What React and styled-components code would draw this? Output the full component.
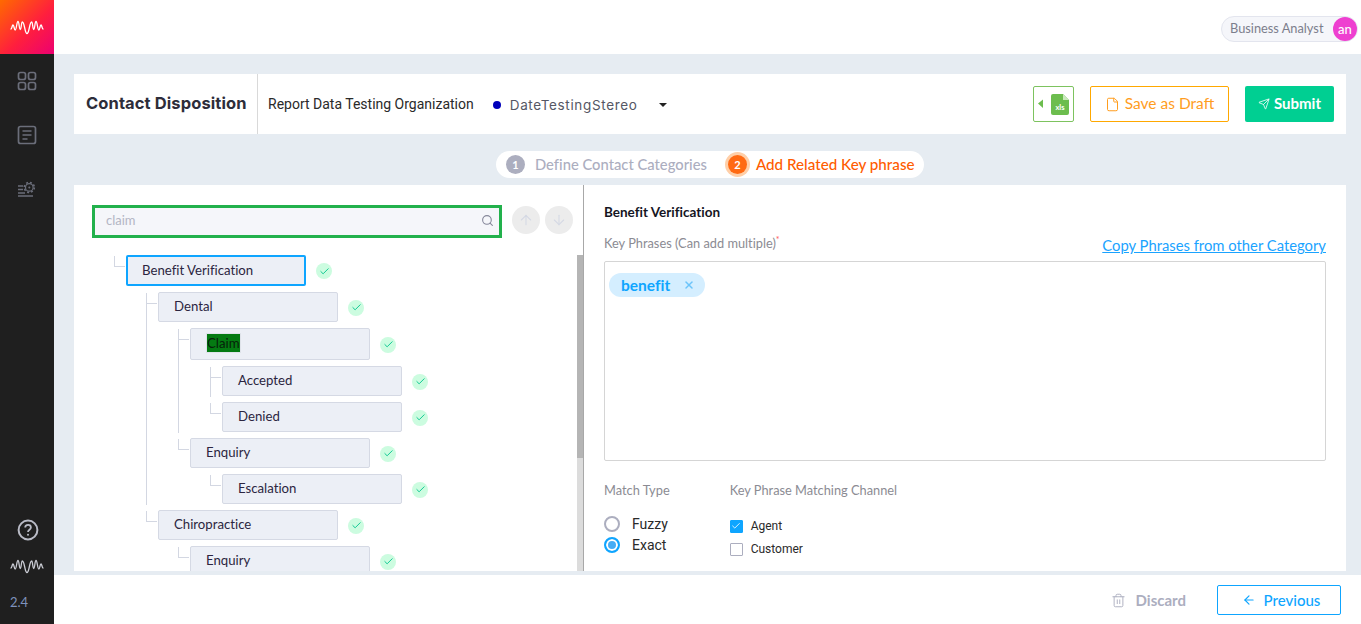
import React from 'react';
import styled, { createGlobalStyle } from 'styled-components';
import { ArrowDown, ArrowLeft, ArrowUp, Check, File, Search, Send, Trash2, X } from 'lucide-react';

const GlobalStyle = createGlobalStyle`
  html, body, #root { height: 100%; }
  body {
    margin: 0;
    font-family: "Lato", "Noto Sans", sans-serif;
    font-variant-ligatures: none;
    color: #2b2b3a;
    overflow: hidden;
  }
  * { box-sizing: border-box; }
`;

const Shell = styled.div`
  display: flex;
  height: 624px;
  background: #fff;
`;

const Sidebar = styled.aside`
  width: 54px;
  flex-shrink: 0;
  background: #1f1f1f;
  display: flex;
  flex-direction: column;
  align-items: center;
`;

const LogoBox = styled.div`
  width: 54px;
  height: 54px;
  background: linear-gradient(135deg, #ff6a00 0%, #ff1f3d 55%, #ec0072 100%);
  display: flex;
  align-items: center;
  justify-content: center;
  margin-bottom: 13px;
`;

const NavIcon = styled.div`
  height: 28px;
  margin-bottom: 26px;
  display: flex;
  align-items: center;
  justify-content: center;
  color: #6b6e7a;
`;

const SideBottom = styled.div`
  margin-top: auto;
  width: 100%;
  display: flex;
  flex-direction: column;
  align-items: center;
  padding-bottom: 14px;
  color: #b9bbc6;
`;

const HelpButton = styled.div`
  display: flex;
  margin: 0 0 17px 1px;
`;

const Version = styled.div`
  align-self: flex-start;
  margin: 20px 0 0 10px;
  font-size: 13px;
  line-height: 16px;
  color: #7f92bd;
`;

const Main = styled.div`
  flex: 1;
  min-width: 0;
  display: flex;
  flex-direction: column;
`;

const TopBar = styled.header`
  height: 54px;
  flex-shrink: 0;
  display: flex;
  align-items: center;
  justify-content: flex-end;
  padding: 4px 3px 0 0;
  background: #fff;
`;

const RolePill = styled.div`
  height: 26px;
  width: 137px;
  border: 1px solid #e3e5ee;
  border-radius: 13px;
  background: #f5f6fa;
  display: flex;
  align-items: center;
  justify-content: space-between;
  padding-left: 8px;
  font-size: 12.8px;
  color: #7c7e8c;
`;

const RoleName = styled.span`
  margin-top: -2px;
`;

const Avatar = styled.span`
  width: 24px;
  height: 24px;
  border-radius: 50%;
  background: #ee3fd0;
  color: #fff;
  font-size: 13px;
  font-weight: 500;
  display: flex;
  align-items: center;
  justify-content: center;
`;

const Content = styled.main`
  flex: 1;
  min-height: 0;
  background: #e6ecf2;
  padding: 20px 15px 4px 20px;
  display: flex;
  flex-direction: column;
`;

const HeaderCard = styled.section`
  height: 60px;
  flex-shrink: 0;
  background: #fff;
  display: flex;
  align-items: center;
  padding-right: 12px;
`;

const PageTitle = styled.h1`
  width: 184px;
  height: 100%;
  margin: 0;
  padding: 0 0 2px 12px;
  border-right: 1px solid #d9d9d9;
  font-family: "Inter", sans-serif;
  font-size: 16.5px;
  font-weight: 700;
  letter-spacing: 0.1px;
  color: #2d2d3a;
  display: flex;
  align-items: center;
  white-space: nowrap;
`;

const OrgName = styled.span`
  margin-left: 10px;
  font-family: "Roboto", sans-serif;
  font-size: 14px;
  color: #2a2a2a;
`;

const ProcessSelect = styled.div`
  margin: 2px 0 0 19px;
  display: flex;
  align-items: center;
  font-family: "Inter", sans-serif;
  font-size: 13.5px;
  color: #555764;
  letter-spacing: 0.65px;
`;

const Dot = styled.span`
  width: 8px;
  height: 8px;
  border-radius: 50%;
  background: #0000bb;
  margin-right: 9px;
`;

const Caret = styled.span`
  margin-left: 22px;
  border-left: 4px solid transparent;
  border-right: 4px solid transparent;
  border-top: 4px solid #222;
`;

const Actions = styled.div`
  margin-left: auto;
  display: flex;
  gap: 16px;
`;

const ExportButton = styled.button`
  width: 41px;
  height: 36px;
  padding: 0;
  background: #fff;
  border: 1px solid #7dc35f;
  border-radius: 2px;
  display: flex;
  align-items: center;
  justify-content: center;
`;

const DraftButton = styled.button`
  width: 139px;
  height: 36px;
  padding: 0 0 3px;
  background: #fff;
  border: 1px solid #ffa800;
  border-radius: 2px;
  color: #ff9d1e;
  font: 400 15.5px "Lato", sans-serif;
  display: flex;
  align-items: center;
  justify-content: center;
  gap: 5px;

  svg { margin-top: 3px; }
`;

const SubmitButton = styled.button`
  width: 89px;
  height: 36px;
  padding: 0 0 3px;
  background: #00cf92;
  border: none;
  border-radius: 2px;
  color: #fff;
  font: 700 15px "Lato", sans-serif;
  display: flex;
  align-items: center;
  justify-content: center;
  gap: 4px;

  svg { margin-top: 3px; }
`;

const StepperRow = styled.div`
  height: 51px;
  flex-shrink: 0;
  display: flex;
  align-items: center;
  justify-content: center;
  padding-top: 10px;
`;

const Stepper = styled.div`
  height: 27px;
  width: 428px;
  background: #fff;
  border-radius: 14px;
  display: flex;
  align-items: center;
  padding-left: 10px;
`;

const StepBadge = styled.span`
  width: 19px;
  height: 19px;
  flex-shrink: 0;
  border-radius: 50%;
  background: ${p => (p.$active ? '#ff6a13' : '#acaebf')};
  box-shadow: ${p => (p.$active ? '0 0 0 3px #ffcfa8' : 'none')};
  color: #fff;
  font-size: 11px;
  font-weight: 700;
  display: flex;
  align-items: center;
  justify-content: center;
  margin-left: ${p => (p.$active ? '21px' : '0')};
`;

const StepLabel = styled.span`
  margin-left: ${p => (p.$active ? '9px' : '10px')};
  padding-bottom: 2px;
  font-size: ${p => (p.$active ? '15.2px' : '14.75px')};
  font-weight: 500;
  color: ${p => (p.$active ? '#ff5c00' : '#acaebf')};
  white-space: nowrap;
`;

const Panels = styled.div`
  flex: 1;
  min-height: 0;
  display: flex;
  background: #fff;
`;

const LeftPanel = styled.section`
  position: relative;
  width: 510px;
  flex-shrink: 0;
  border-right: 1px solid #a8a8a8;
  padding-top: 20px;
  display: flex;
  flex-direction: column;
  min-height: 0;
`;

const SearchRow = styled.div`
  display: flex;
  align-items: flex-start;
  padding-left: 18px;
  margin-bottom: 17px;
`;

const SearchBox = styled.div`
  width: 410px;
  height: 33px;
  border: 3px solid #22b14c;
  background: #f5f6fa;
  display: flex;
  align-items: center;
  justify-content: space-between;
  padding: 0 5px 3px 11px;
  font-size: 13px;
  color: #b3b5c4;
  margin-right: 10px;
`;

const RoundButton = styled.button`
  width: 28px;
  height: 28px;
  padding: 0;
  margin: 1px 5px 0 0;
  border: none;
  border-radius: 50%;
  background: #ececec;
  color: #d5d9e4;
  display: flex;
  align-items: center;
  justify-content: center;
`;

const TreeScroll = styled.div`
  flex: 1;
  min-height: 0;
  overflow: hidden;
  padding-left: 52px;
`;

const ScrollTrack = styled.div`
  position: absolute;
  right: 0;
  top: 70px;
  bottom: 0;
  width: 6px;
  background: #dcdcdc;
`;

const ScrollThumb = styled.div`
  height: 203px;
  background: #b5b5b5;
`;

const Branch = styled.ul`
  list-style: none;
  margin: 0;
  padding: 0 0 0 ${p => (p.$root ? '0' : '32px')};
`;

const Leaf = styled.li`
  position: relative;

  &::before {
    content: '';
    position: absolute;
    left: -12px;
    top: 1px;
    width: 10px;
    height: 10px;
    border-left: 1px solid #d3d7e2;
    border-bottom: 1px solid #d3d7e2;
  }

  &:not(:last-child)::after {
    content: '';
    position: absolute;
    left: -12px;
    top: 1px;
    bottom: -1px;
    border-left: 1px solid #d3d7e2;
  }
`;

const Row = styled.div`
  display: flex;
  align-items: center;
  gap: 10px;
  margin-bottom: 6px;
`;

const Node = styled.div`
  width: 180px;
  padding: ${p => (p.$selected ? '4px 14px 5px' : '4px 15px 6px')};
  background: #eceff6;
  border: ${p => (p.$selected ? '2px solid #0ea5ff' : '1px solid #d5d9e4')};
  border-radius: 2px;
  font-size: 13.2px;
  line-height: 18px;
  color: #2b2540;
`;

const Highlight = styled.mark`
  display: inline-block;
  background: #047a12;
  color: #06210a;
  border: 1px solid #dfe3ea;
`;

const DoneBadge = styled.span`
  width: 16px;
  height: 16px;
  margin-top: 1px;
  border-radius: 50%;
  background: #ccfce0;
  color: #00c48c;
  display: flex;
  align-items: center;
  justify-content: center;
`;

const RightPanel = styled.section`
  flex: 1;
  min-width: 0;
  padding: 19px 20px 0;
  overflow: hidden;
`;

const SectionTitle = styled.h2`
  margin: 0 0 15px;
  font-size: 13.5px;
  line-height: 16px;
  font-weight: 700;
  color: #15151f;
`;

const LabelRow = styled.div`
  display: flex;
  justify-content: space-between;
  align-items: flex-end;
  margin-bottom: 7px;

  label { margin-bottom: 3px; }
`;

const FieldLabel = styled.label`
  font-size: 12.8px;
  line-height: 16px;
  color: #8b8b93;

  sup {
    color: #ff5a5a;
    font-size: 9px;
    line-height: 0;
  }
`;

const CopyLink = styled.a`
  margin-bottom: 1px;
  font-size: 14.8px;
  line-height: 16px;
  color: #1aa3ff;
  text-decoration: underline;
`;

const PhraseBox = styled.div`
  height: 200px;
  border: 1px solid #d5d5d5;
  border-radius: 2px;
  padding: 11px 4px;
`;

const Chip = styled.span`
  display: inline-flex;
  align-items: center;
  justify-content: space-between;
  width: 96px;
  height: 24px;
  padding: 0 10px 0 12px;
  border-radius: 12px;
  background: #d4eeff;
  color: #0ea5ff;
  font-size: 15.5px;
  font-weight: 700;

  svg { color: #6cc4fa; }
`;

const OptionsRow = styled.div`
  display: flex;
  gap: 60px;
  margin-top: 21px;
`;

const OptionGroup = styled.div`
  display: flex;
  flex-direction: column;
`;

const OptionList = styled.div`
  margin-top: ${p => p.$offset}px;
  display: flex;
  flex-direction: column;
  gap: ${p => p.$gap}px;
`;

const Option = styled.div`
  display: flex;
  align-items: center;
  font-family: "Roboto", sans-serif;
  font-size: ${p => p.$size}px;
  line-height: 16px;
  color: #2a2a2a;
`;

const Radio = styled.span`
  width: 16px;
  height: 16px;
  margin-right: 12px;
  border-radius: 50%;
  border: 2px solid ${p => (p.$on ? '#0ea5ff' : '#acaebf')};
  background: ${p => (p.$on ? '#46acf5' : '#fff')};
  box-shadow: ${p => (p.$on ? 'inset 0 0 0 2px #fff' : 'none')};
`;

const CheckBox = styled.span`
  width: 13px;
  height: 13px;
  margin-right: 8px;
  border-radius: 1px;
  border: 1px solid ${p => (p.$on ? '#0ea5ff' : '#acaebf')};
  background: ${p => (p.$on ? '#0ea5ff' : '#fff')};
  color: #fff;
  display: flex;
  align-items: center;
  justify-content: center;
`;

const Footer = styled.footer`
  height: 49px;
  flex-shrink: 0;
  background: #fff;
  display: flex;
  align-items: center;
  justify-content: flex-end;
  padding: 1px 20px 0 0;
`;

const DiscardButton = styled.button`
  background: none;
  border: none;
  padding: 0;
  margin-right: 31px;
  color: #acaebf;
  font: 700 15px "Lato", sans-serif;
  display: flex;
  align-items: center;
  gap: 10px;
`;

const PreviousButton = styled.button`
  width: 124px;
  height: 30px;
  padding: 0 0 0 4px;
  background: #fff;
  border: 1px solid #0ea5ff;
  border-radius: 2px;
  color: #0ea5ff;
  font: 500 15px "Lato", sans-serif;
  display: flex;
  align-items: center;
  justify-content: center;
  gap: 8px;
`;

// extremes of the wave mark, joined by smooth curves
const WAVE_POINTS = [[1, 10], [3, 6], [5.2, 11], [8, 2.5], [10.3, 10.5], [12.3, 3], [17, 14.5], [21.7, 3], [23.7, 10.5], [26, 2.5], [28.8, 11], [31, 6], [33, 10]];
const WAVE = WAVE_POINTS.reduce((d, [x, y], i) => {
  if (i === 0) return `M${x} ${y}`;
  const [px, py] = WAVE_POINTS[i - 1];
  const mid = (px + x) / 2;
  return `${d}C${mid} ${py} ${mid} ${y} ${x} ${y}`;
}, '');

const WaveLogo = ({ color }) => (
  <svg width="34" height="16" viewBox="0 0 34 16" fill="none" stroke={color} strokeWidth="1.3" strokeLinecap="round">
    <path d={WAVE} />
  </svg>
);

const GridIcon = () => (
  <svg width="20" height="20" viewBox="0 0 20 20" fill="none" stroke="currentColor" strokeWidth="1.7">
    <rect x="1.5" y="1.5" width="7" height="7" rx="2" />
    <rect x="11.5" y="1.5" width="7" height="7" rx="2" />
    <rect x="1.5" y="11.5" width="7" height="7" rx="2" />
    <rect x="11.5" y="11.5" width="7" height="7" rx="2" />
  </svg>
);

const NoteIcon = () => (
  <svg width="20" height="20" viewBox="0 0 20 20" fill="none" stroke="currentColor" strokeWidth="1.7">
    <rect x="1.5" y="1.5" width="17" height="17" rx="2" />
    <path d="M5.5 6h9M5.5 10h9M5.5 14h5" />
  </svg>
);

const ListGearIcon = () => (
  <svg width="20" height="20" viewBox="0 0 20 20" fill="none" stroke="currentColor">
    <path d="M1 7h5M1 10.5h5M1 14h7M1 17h15" strokeWidth="1.5" />
    <circle cx="12.3" cy="8.4" r="5" strokeWidth="1.6" strokeDasharray="2 1.93" />
    <circle cx="12.3" cy="8.4" r="3.8" strokeWidth="1.2" />
    <circle cx="12.3" cy="8.4" r="1" fill="currentColor" stroke="none" />
  </svg>
);

const HelpIcon = () => (
  <svg width="22" height="22" viewBox="0 0 22 22" fill="none" stroke="currentColor" strokeWidth="2">
    <circle cx="11" cy="11" r="9.4" />
    <path d="M8.2 8.6c0-1.7 1.3-2.7 2.9-2.7s2.8 1 2.8 2.5c0 2.3-2.9 2.3-2.9 4.6" strokeWidth="1.8" />
    <circle cx="11" cy="15.8" r="1" fill="currentColor" stroke="none" />
  </svg>
);

const XlsIcon = () => (
  <svg width="31" height="21" viewBox="0 0 31 21">
    <path d="M0 4.5L5 0.5V9z" transform="translate(0 5)" fill="#6cbd4e" />
    <path d="M15 0h10l6 6v13a2 2 0 0 1-2 2H15a2 2 0 0 1-2-2V2a2 2 0 0 1 2-2z" fill="#6cbd4e" />
    <path d="M25 0l6 6h-6z" fill="#c9e8bb" />
    <text x="22" y="16" textAnchor="middle" fontFamily="Lato, sans-serif" fontWeight="700" fontSize="7.5" fill="#fff">xls</text>
  </svg>
);

const TREE = [
  {
    name: 'Benefit Verification',
    selected: true,
    children: [
      {
        name: 'Dental',
        children: [
          {
            name: 'Claim',
            match: true,
            children: [{ name: 'Accepted' }, { name: 'Denied' }],
          },
          { name: 'Enquiry', children: [{ name: 'Escalation' }] },
        ],
      },
      { name: 'Chiropractice', children: [{ name: 'Enquiry' }] },
    ],
  },
];

const TreeBranch = ({ items, root }) => (
  <Branch $root={root}>
    {items.map(item => (
      <Leaf key={item.name}>
        <Row>
          <Node $selected={item.selected}>
            {item.match ? <Highlight>{item.name}</Highlight> : item.name}
          </Node>
          <DoneBadge><Check size={11} strokeWidth={2} /></DoneBadge>
        </Row>
        {item.children && <TreeBranch items={item.children} />}
      </Leaf>
    ))}
  </Branch>
);

export default function App() {
  return (
    <Shell>
      <GlobalStyle />
      <Sidebar>
        <LogoBox><WaveLogo color="#fff" /></LogoBox>
        <NavIcon><GridIcon /></NavIcon>
        <NavIcon><NoteIcon /></NavIcon>
        <NavIcon><ListGearIcon /></NavIcon>
        <SideBottom>
          <HelpButton><HelpIcon /></HelpButton>
          <WaveLogo color="#c9cbd3" />
          <Version>2.4</Version>
        </SideBottom>
      </Sidebar>
      <Main>
        <TopBar>
          <RolePill>
            <RoleName>Business Analyst</RoleName>
            <Avatar>an</Avatar>
          </RolePill>
        </TopBar>
        <Content>
          <HeaderCard>
            <PageTitle>Contact Disposition</PageTitle>
            <OrgName>Report Data Testing Organization</OrgName>
            <ProcessSelect>
              <Dot />
              DateTestingStereo
              <Caret />
            </ProcessSelect>
            <Actions>
              <ExportButton><XlsIcon /></ExportButton>
              <DraftButton><File size={15} strokeWidth={1.6} />Save as Draft</DraftButton>
              <SubmitButton><Send size={12} strokeWidth={1.6} />Submit</SubmitButton>
            </Actions>
          </HeaderCard>
          <StepperRow>
            <Stepper>
              <StepBadge>1</StepBadge>
              <StepLabel>Define Contact Categories</StepLabel>
              <StepBadge $active>2</StepBadge>
              <StepLabel $active>Add Related Key phrase</StepLabel>
            </Stepper>
          </StepperRow>
          <Panels>
            <LeftPanel>
              <SearchRow>
                <SearchBox>
                  claim
                  <Search size={13} color="#85879a" strokeWidth={2} />
                </SearchBox>
                <RoundButton><ArrowUp size={16} strokeWidth={1.6} /></RoundButton>
                <RoundButton><ArrowDown size={16} strokeWidth={1.6} /></RoundButton>
              </SearchRow>
              <TreeScroll>
                <TreeBranch items={TREE} root />
              </TreeScroll>
              <ScrollTrack><ScrollThumb /></ScrollTrack>
            </LeftPanel>
            <RightPanel>
              <SectionTitle>Benefit Verification</SectionTitle>
              <LabelRow>
                <FieldLabel>Key Phrases (Can add multiple)<sup>*</sup></FieldLabel>
                <CopyLink>Copy Phrases from other Category</CopyLink>
              </LabelRow>
              <PhraseBox>
                <Chip>benefit<X size={12} strokeWidth={3} /></Chip>
              </PhraseBox>
              <OptionsRow>
                <OptionGroup>
                  <FieldLabel>Match Type</FieldLabel>
                  <OptionList $offset={18} $gap={5}>
                    <Option $size={14}><Radio />Fuzzy</Option>
                    <Option $size={14}><Radio $on />Exact</Option>
                  </OptionList>
                </OptionGroup>
                <OptionGroup>
                  <FieldLabel>Key Phrase Matching Channel</FieldLabel>
                  <OptionList $offset={20} $gap={7}>
                    <Option $size={12}><CheckBox $on><Check size={10} strokeWidth={2} /></CheckBox>Agent</Option>
                    <Option $size={12}><CheckBox />Customer</Option>
                  </OptionList>
                </OptionGroup>
              </OptionsRow>
            </RightPanel>
          </Panels>
        </Content>
        <Footer>
          <DiscardButton><Trash2 size={15} strokeWidth={1.5} />Discard</DiscardButton>
          <PreviousButton><ArrowLeft size={14} strokeWidth={2} />Previous</PreviousButton>
        </Footer>
      </Main>
    </Shell>
  );
}
